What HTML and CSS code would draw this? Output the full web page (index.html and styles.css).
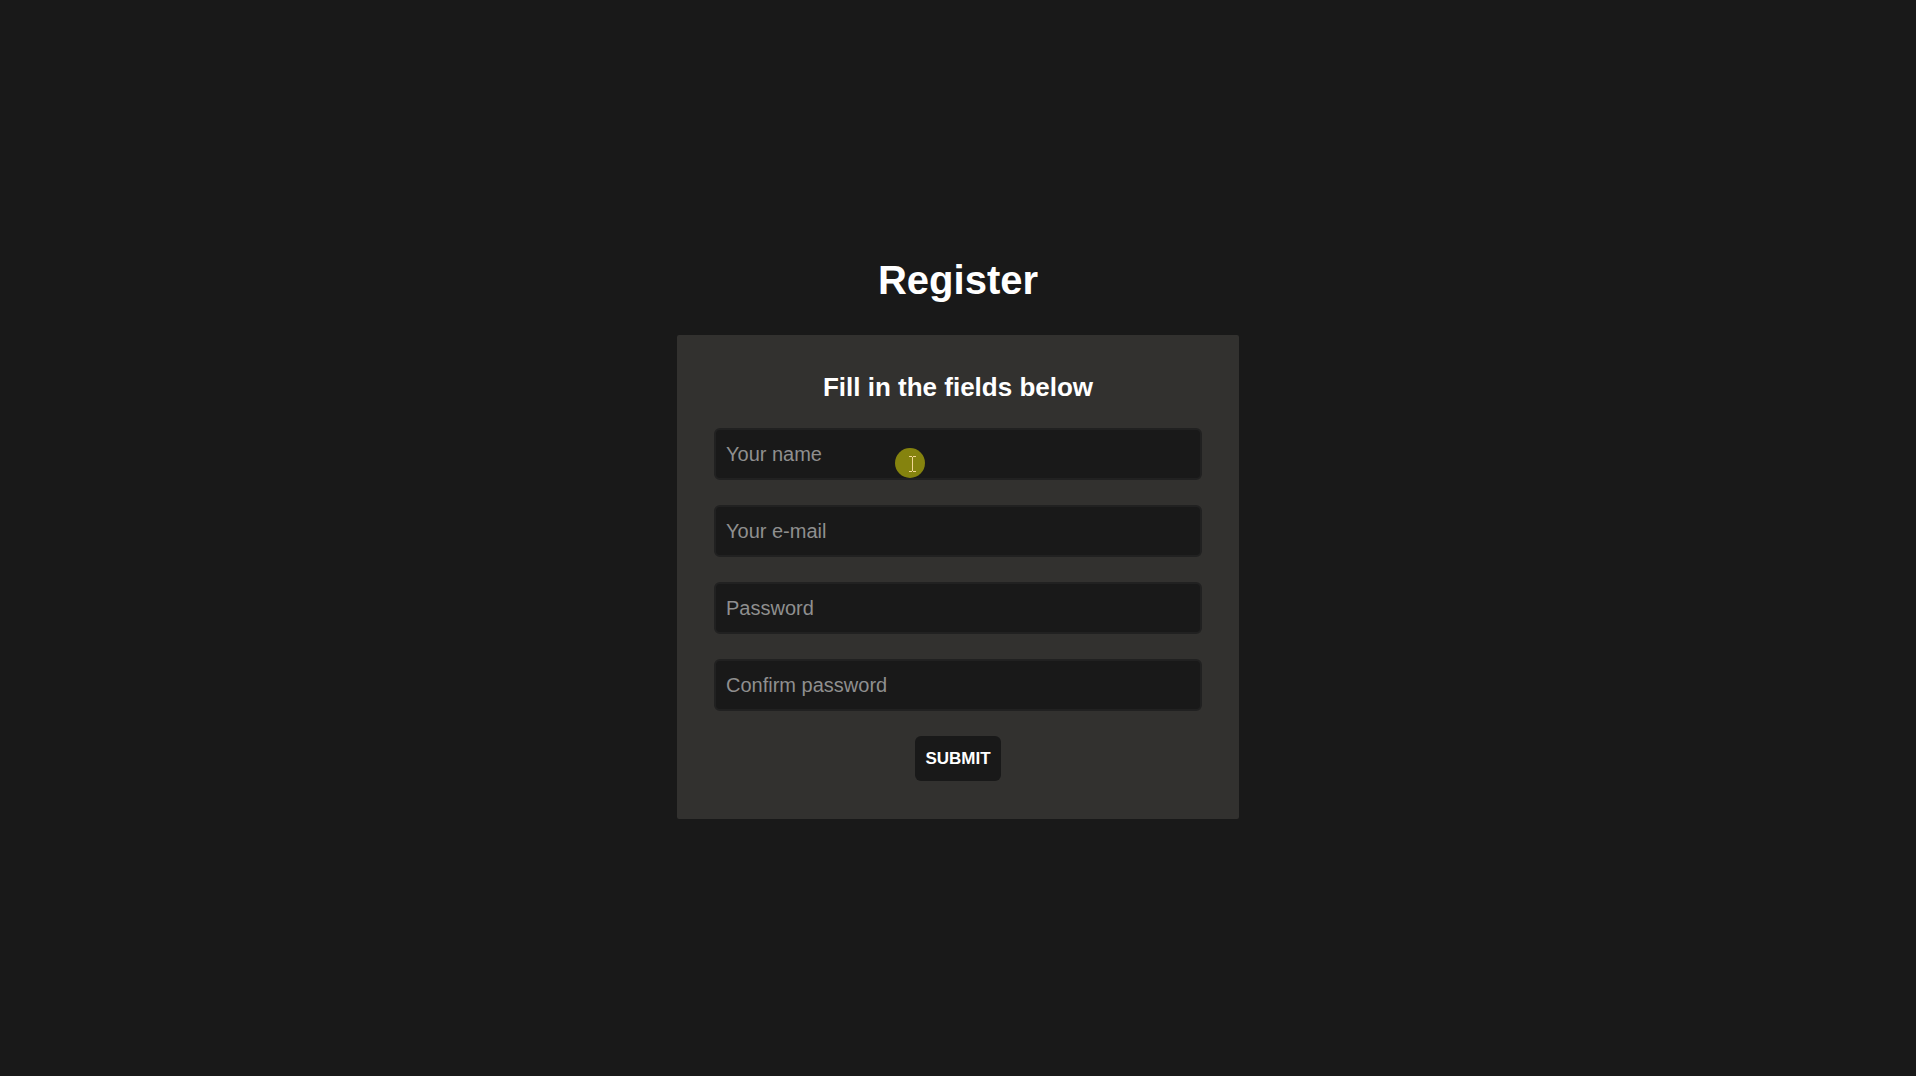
FILE: index.html
```html
<!DOCTYPE html>
<html lang="en">
<head>
  <meta charset="utf-8">
  <meta name="viewport" content="width=device-width, initial-scale=1">
  <title>Register</title>
  <link rel="stylesheet" href="styles.css">
</head>
<body>
  <main class="page">
    <h1 class="page-title">Register</h1>
    <form class="card">
      <h2 class="card-title">Fill in the fields below</h2>
      <div class="field">
        <input class="field-input" type="text" name="name" placeholder="Your name" aria-label="Your name">
        <svg class="pointer" viewBox="0 0 30 30" aria-hidden="true">
          <circle cx="15" cy="15" r="15" fill="#85830e"/>
          <path d="M14 8.500h3M18 8.500h3M17.500 9v14M14 23.500h3M18 23.500h3" fill="none" stroke="#f3d795"/>
        </svg>
      </div>
      <div class="field">
        <input class="field-input" type="email" name="email" placeholder="Your e-mail" aria-label="Your e-mail">
      </div>
      <div class="field">
        <input class="field-input" type="password" name="password" placeholder="Password" aria-label="Password">
      </div>
      <div class="field">
        <input class="field-input" type="password" name="confirm" placeholder="Confirm password" aria-label="Confirm password">
      </div>
      <button class="submit" type="submit">SUBMIT</button>
    </form>
  </main>
</body>
</html>
```
FILE: styles.css
```css
* {
  box-sizing: border-box;
}

body {
  margin: 0;
  background: #191919;
  color: #fff;
  font-family: "Liberation Sans", Arial, sans-serif;
}

.page {
  min-height: 100vh;
  display: flex;
  flex-direction: column;
  align-items: center;
  justify-content: center;
  gap: 32px;
}

.page-title {
  margin: 0;
  font-size: 40px;
  line-height: 46px;
}

.card {
  width: 100%;
  max-width: 562px;
  padding: 37px 37px 38px;
  display: flex;
  flex-direction: column;
  align-items: center;
  gap: 25px;
  border-radius: 2px;
  background: #32312f;
}

.card-title {
  margin: 0;
  font-size: 26px;
  line-height: 31px;
}

.field {
  position: relative;
  width: 100%;
}

.field-input {
  display: block;
  width: 100%;
  height: 52px;
  padding: 0 10px;
  border: 2px solid #212121;
  border-radius: 6px;
  background: #191919;
  color: #fff;
  font: inherit;
  font-size: 20px;
}

.field-input::placeholder {
  color: #8f8f8f;
}

.pointer {
  position: absolute;
  top: 20px;
  left: 181px;
  width: 30px;
  height: 30px;
  pointer-events: none;
}

.submit {
  height: 45px;
  padding: 0 10px;
  border: 0;
  border-radius: 6px;
  background: #191919;
  color: #fff;
  font: inherit;
  font-size: 17px;
  font-weight: bold;
}
```
